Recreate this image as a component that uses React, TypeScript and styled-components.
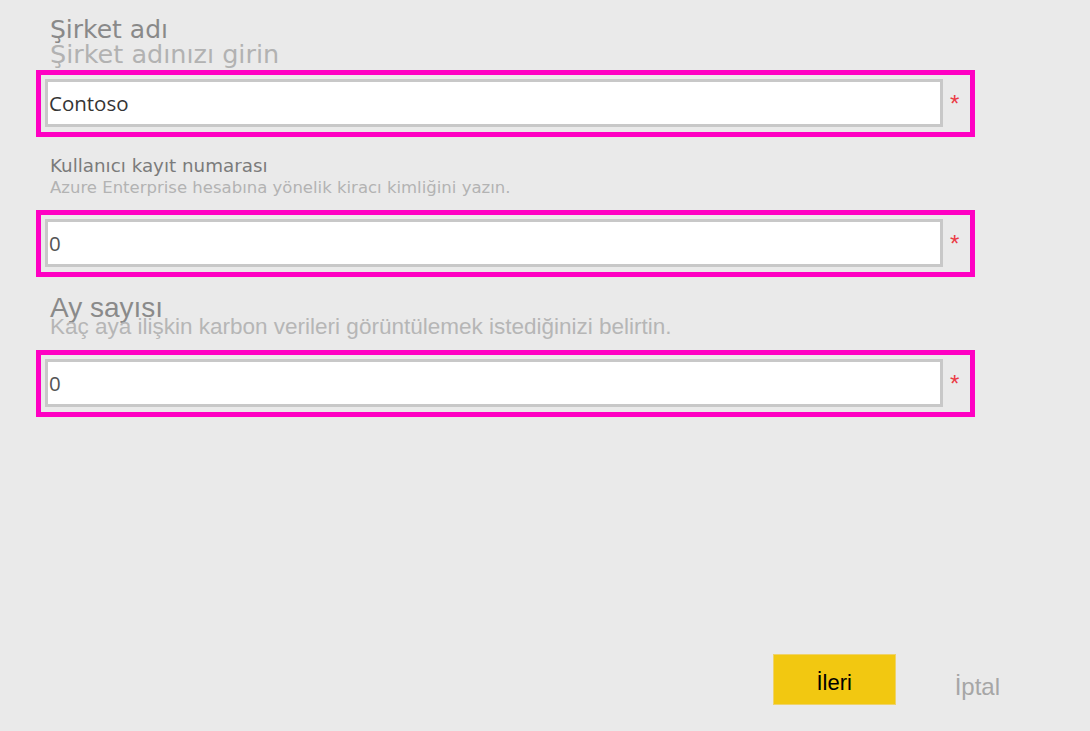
import React from "react";
import styled, { createGlobalStyle } from "styled-components";

const GlobalStyle = createGlobalStyle`
  html, body {
    margin: 0;
    padding: 0;
    background: #eaeaea;
  }
  body {
    font-family: "Liberation Sans", Arial, sans-serif;
  }
  * {
    box-sizing: border-box;
  }
`;

const Page = styled.div`
  width: 1090px;
  height: 731px;
  display: flex;
  flex-direction: column;
  overflow: hidden;
  background: #eaeaea;
`;

const Form = styled.div`
  display: flex;
  flex-direction: column;
  gap: 3px;
  padding-left: 36px;
`;

const Field = styled.section`
  display: flex;
  flex-direction: column;
`;

const Header = styled.div<{ $pb: number }>`
  height: 70px;
  display: flex;
  flex-direction: column;
  justify-content: flex-end;
  padding-left: 14px;
  padding-bottom: ${(p) => p.$pb}px;
`;

const Label = styled.div<{
  $family: string;
  $size: number;
  $lh: number;
  $color: string;
}>`
  font-family: ${(p) => p.$family};
  font-size: ${(p) => p.$size}px;
  line-height: ${(p) => p.$lh}px;
  color: ${(p) => p.$color};
  white-space: nowrap;
`;

const HighlightBox = styled.div`
  width: 939px;
  height: 67px;
  border: 5px solid #ff00c3;
  display: flex;
  align-items: flex-start;
  padding: 4px 0 0 4px;
`;

const TextInput = styled.input<{ $color: string }>`
  width: 898px;
  height: 48px;
  border: 3px solid #c8c8c8;
  background: #ffffff;
  padding: 0 0 0 1px;
  margin: 0;
  font-family: "Open Sans", "Liberation Sans", sans-serif;
  font-size: 20.5px;
  color: ${(p) => p.$color};
  outline: none;
`;

const Required = styled.span`
  margin-left: 7px;
  margin-top: 13px;
  font-family: "Liberation Sans", Arial, sans-serif;
  font-size: 24px;
  line-height: 24px;
  color: #ea3b45;
`;

const Footer = styled.div`
  margin-top: auto;
  display: flex;
  justify-content: flex-end;
  align-items: flex-start;
  padding: 0 90px 26px 0;
`;

const PrimaryButton = styled.button`
  width: 123px;
  height: 51px;
  background: #f2c811;
  border: 1px solid #efd36a;
  padding: 6px 0 0 0;
  display: flex;
  align-items: center;
  justify-content: center;
  font-family: "Liberation Sans", Arial, sans-serif;
  font-size: 22px;
  line-height: 21px;
  color: #000000;
  cursor: pointer;
`;

const CancelButton = styled.button`
  margin-left: 59px;
  margin-top: 21px;
  background: none;
  border: none;
  padding: 0;
  font-family: "Liberation Sans", Arial, sans-serif;
  font-size: 24px;
  line-height: 24px;
  color: #a6a6a6;
  cursor: pointer;
`;

type LabelSpec = {
  text: string;
  family: string;
  size: number;
  lh: number;
  color: string;
};

type FieldSpec = {
  title: LabelSpec;
  desc: LabelSpec;
  pb: number;
  value: string;
  valueColor: string;
};

const DEJAVU = '"DejaVu Sans", Verdana, sans-serif';
const LIB = '"Liberation Sans", Arial, sans-serif';

const fields: FieldSpec[] = [
  {
    title: { text: "Şirket adı", family: DEJAVU, size: 25, lh: 24, color: "#898989" },
    desc: { text: "Şirket adınızı girin", family: DEJAVU, size: 25.5, lh: 24, color: "#b2b2b2" },
    pb: 4,
    value: "Contoso",
    valueColor: "#353535",
  },
  {
    title: { text: "Kullanıcı kayıt numarası", family: DEJAVU, size: 18.3, lh: 23, color: "#7b7b7b" },
    desc: {
      text: "Azure Enterprise hesabına yönelik kiracı kimliğini yazın.",
      family: DEJAVU,
      size: 16.5,
      lh: 22,
      color: "#b3b3b3",
    },
    pb: 11,
    value: "0",
    valueColor: "#555555",
  },
  {
    title: { text: "Ay sayısı", family: LIB, size: 28, lh: 20, color: "#8a8a8a" },
    desc: {
      text: "Kaç aya ilişkin karbon verileri görüntülemek istediğinizi belirtin.",
      family: LIB,
      size: 22.5,
      lh: 18,
      color: "#b6b6b6",
    },
    pb: 14,
    value: "0",
    valueColor: "#555555",
  },
];

const FormField: React.FC<{ spec: FieldSpec }> = ({ spec }) => (
  <Field>
    <Header $pb={spec.pb}>
      <Label
        $family={spec.title.family}
        $size={spec.title.size}
        $lh={spec.title.lh}
        $color={spec.title.color}
      >
        {spec.title.text}
      </Label>
      <Label
        $family={spec.desc.family}
        $size={spec.desc.size}
        $lh={spec.desc.lh}
        $color={spec.desc.color}
      >
        {spec.desc.text}
      </Label>
    </Header>
    <HighlightBox>
      <TextInput type="text" defaultValue={spec.value} $color={spec.valueColor} />
      <Required>*</Required>
    </HighlightBox>
  </Field>
);

export default function App() {
  return (
    <>
      <GlobalStyle />
      <Page>
        <Form>
          {fields.map((f) => (
            <FormField key={f.title.text} spec={f} />
          ))}
        </Form>
        <Footer>
          <PrimaryButton>İleri</PrimaryButton>
          <CancelButton>İptal</CancelButton>
        </Footer>
      </Page>
    </>
  );
}
